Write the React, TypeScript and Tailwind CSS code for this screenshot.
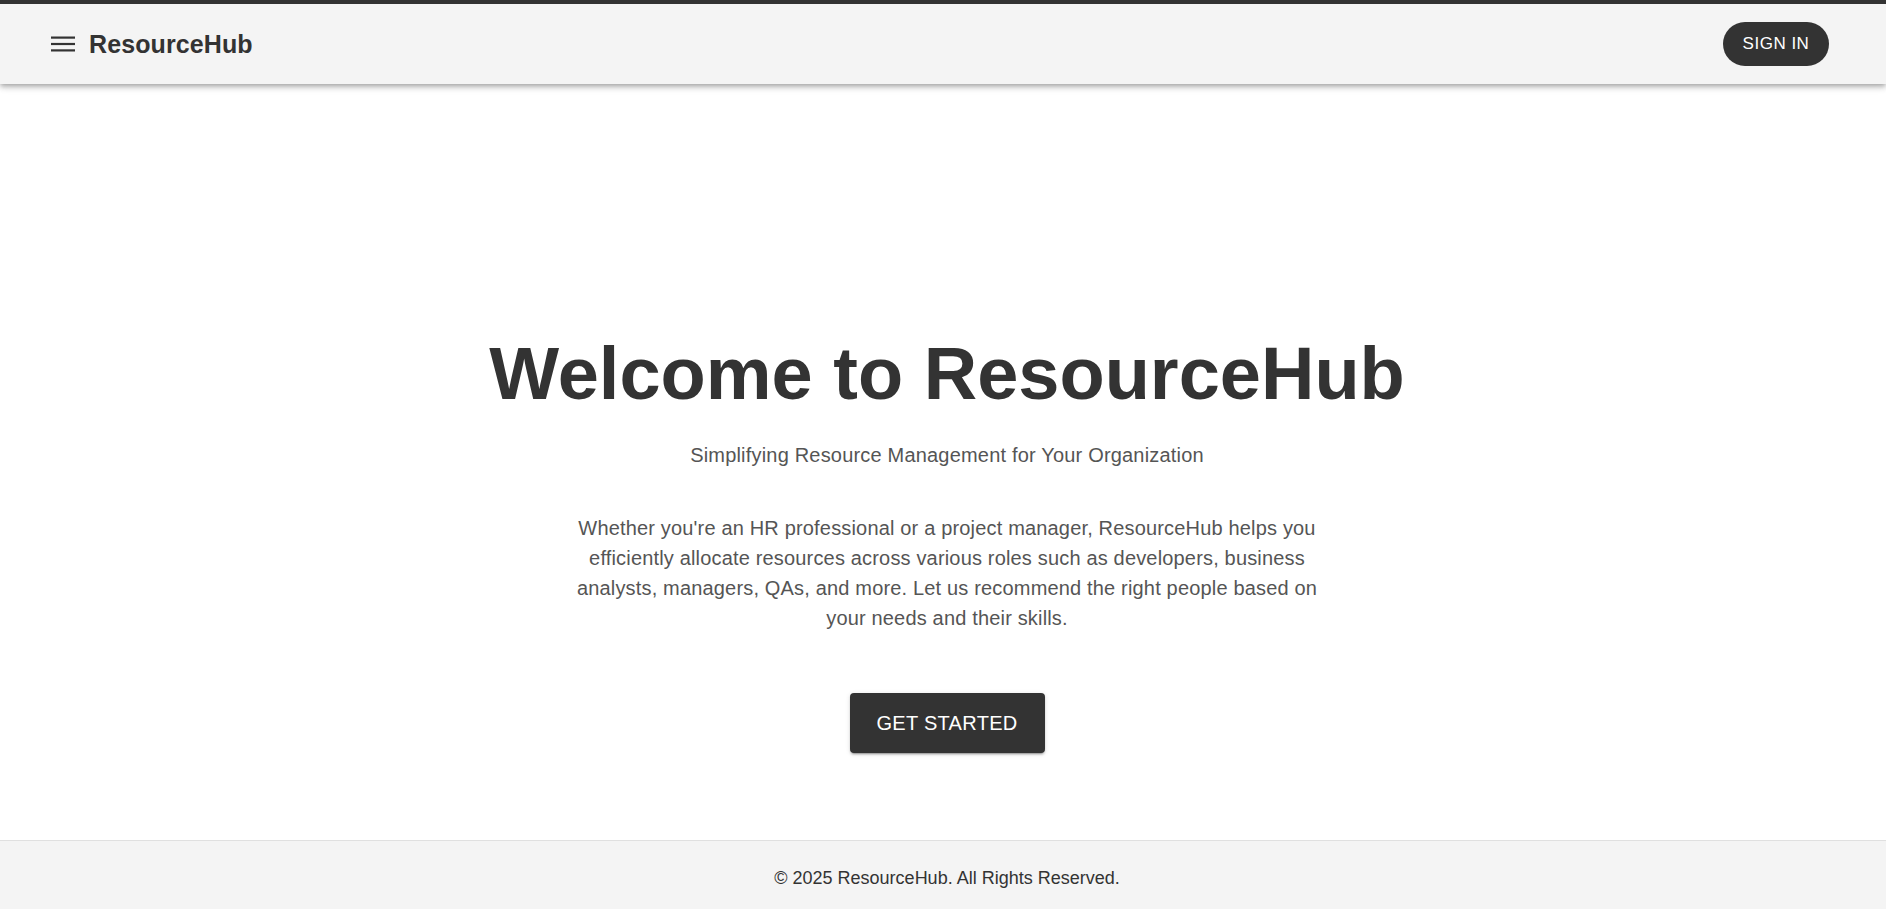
import React from 'react';

const MenuIcon = () => (
  <svg width="24" height="16" viewBox="0 0 24 16" className="shrink-0" fill="#333333">
    <rect x="0" y="0.5" width="24" height="2.2" />
    <rect x="0" y="6.9" width="24" height="2.2" />
    <rect x="0" y="13.3" width="24" height="2.2" />
  </svg>
);

const Header: React.FC = () => (
  <header className="relative z-10 border-t-4 border-[#333333] bg-[#f4f4f4] h-[84px] pl-[51px] pr-[57px] flex items-center justify-between shadow-[0_2px_4px_-1px_rgba(0,0,0,0.2),0_4px_5px_0_rgba(0,0,0,0.14),0_1px_10px_0_rgba(0,0,0,0.12)]">
    <div className="flex items-center gap-[14px]">
      <MenuIcon />
      <span className="text-[25px] font-bold text-[#333333] leading-none tracking-[0.1px]">ResourceHub</span>
    </div>
    <button className="h-[44px] w-[106px] rounded-full bg-[#333333] text-white text-[17px] tracking-[0.5px] flex items-center justify-center">
      SIGN IN
    </button>
  </header>
);

const App: React.FC = () => {
  return (
    <div className="min-h-screen flex flex-col bg-white font-['Liberation_Sans',Arial,sans-serif]">
      <Header />

      {/* Hero */}
      <main className="flex-1 flex flex-col items-center pt-[246px] pl-[24px] pr-[16px] text-center">
        <h1 className="text-[74px] leading-[1.2] font-bold text-[#333333]">Welcome to ResourceHub</h1>
        <p className="mt-[21px] text-[20px] leading-[30px] tracking-[0.19px] text-[#555555]">
          Simplifying Resource Management for Your Organization
        </p>
        <p className="mt-[43px] max-w-[770px] text-[20px] leading-[30px] tracking-[0.17px] text-[#555555]">
          Whether you're an HR professional or a project manager, ResourceHub helps you efficiently allocate
          resources across various roles such as developers, business analysts, managers, QAs, and more. Let us
          recommend the right people based on your needs and their skills.
        </p>
        <button className="mt-[60px] h-[60px] w-[195px] rounded-[4px] bg-[#333333] text-white text-[20px] tracking-[0.3px] shadow-[0_3px_1px_-2px_rgba(0,0,0,0.2),0_2px_2px_0_rgba(0,0,0,0.14),0_1px_5px_0_rgba(0,0,0,0.12)]">
          GET STARTED
        </button>
      </main>

      <footer className="border-t border-[#e0e0e0] bg-[#f4f4f4] pt-[27px] pb-[21px] pl-[8px] text-center">
        <p className="text-[18px] leading-[20px] text-[#333333]">© 2025 ResourceHub. All Rights Reserved.</p>
      </footer>
    </div>
  );
};

export default App;
